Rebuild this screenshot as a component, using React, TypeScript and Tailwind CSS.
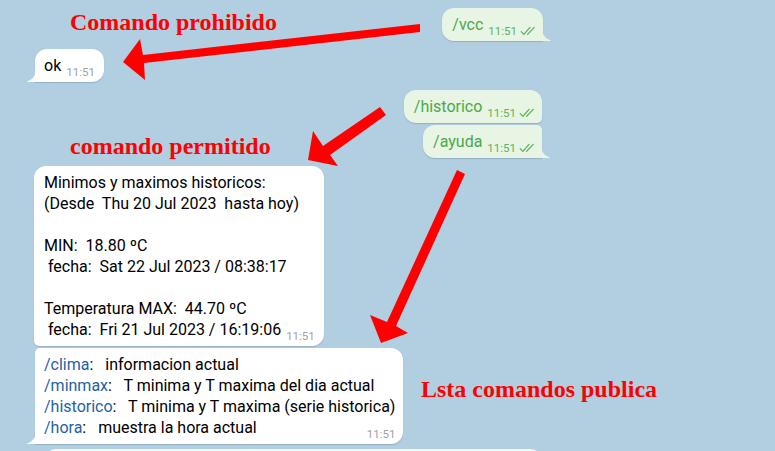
import React from "react";

function InTail() {
  return (
    <svg className="absolute bottom-0 left-[-8px]" width="9" height="13" viewBox="0 0 9 13">
      <path d="M9 0 C9 6 6 10.5 0.5 12.2 C0.2 12.4 0.4 13 1 13 L9 13 Z" fill="#ffffff" />
    </svg>
  );
}

function OutTail() {
  return (
    <svg className="absolute bottom-0 right-[-8px]" width="9" height="13" viewBox="0 0 9 13">
      <path d="M0 0 C0 6 3 10.5 8.5 12.2 C8.8 12.4 8.6 13 8 13 L0 13 Z" fill="#e8f5e5" />
    </svg>
  );
}

function Checks() {
  return (
    <svg width="16" height="10" viewBox="0 0 16 10" className="ml-[3px]">
      <path d="M1.2 5.6 L3.9 8.4 L10 1.4" fill="none" stroke="#5bb35a" strokeWidth="1.3" strokeLinecap="round" strokeLinejoin="round" />
      <path d="M7.6 8.4 L14.2 1.4" fill="none" stroke="#5bb35a" strokeWidth="1.3" strokeLinecap="round" />
    </svg>
  );
}

function OutBubble({ text, tail, radius, extra }: { text: string; tail?: boolean; radius: string; extra: string }) {
  return (
    <div className={`relative self-end bg-[#e8f5e5] pl-[10px] pr-[7px] pt-[6px] pb-[6px] flex items-end shadow-[0_1px_1px_rgba(60,90,110,0.25)] ${radius} ${extra}`}>
      <span className="text-[16px] leading-[21px] text-[#4aa949]">{text}</span>
      <span className="flex items-center ml-[5px] translate-y-[3px] text-[11.5px] leading-[14px] text-[#5bb35a]">
        11:51
        <Checks />
      </span>
      {tail && <OutTail />}
    </div>
  );
}

function Time() {
  return <span className="ml-[5px] shrink-0 translate-y-[3px] text-[11.5px] leading-[14px] text-[#a2a2a2]">11:51</span>;
}

function Cmd({ c, d }: { c: string; d: string }) {
  return (
    <span className="whitespace-pre">
      <span className="text-[#1f5fa6]">{c}</span>
      <span>{":   " + d}</span>
    </span>
  );
}

export default function App() {
  return (
    <div
      className="relative w-[775px] h-[451px] overflow-hidden bg-[#b2cee1]"
      style={{ fontFamily: "Roboto, 'Noto Sans', sans-serif" }}
    >
      <div className="flex flex-col w-[548px] pl-[35px] pt-[8px]">
        <OutBubble text="/vcc" tail radius="rounded-[12px] rounded-br-none" extra="mr-[5px]" />

        <div className="relative self-start mt-[8px] bg-white pl-[9px] pr-[9px] pt-[6px] pb-[6px] flex items-end rounded-[12px] rounded-bl-none shadow-[0_1px_1px_rgba(60,90,110,0.25)]">
          <span className="text-[16px] leading-[21px] text-black">ok</span>
          <span className="ml-[5px] translate-y-[3px] text-[11.5px] leading-[14px] text-[#a2a2a2]">11:51</span>
          <InTail />
        </div>

        <OutBubble text="/historico" radius="rounded-[12px] rounded-br-[5px]" extra="mt-[8px] mr-[6px]" />
        <OutBubble text="/ayuda" tail radius="rounded-[12px] rounded-tr-[5px] rounded-br-none" extra="mt-[2px] mr-[6px]" />

        <div className="relative self-start mt-[8px] -ml-[1px] bg-white pl-[10px] pr-[9px] pt-[6px] pb-[6px] rounded-[12px] rounded-bl-[5px] shadow-[0_1px_1px_rgba(60,90,110,0.25)] text-[16px] leading-[21px] text-black whitespace-pre">
          <div>Minimos y maximos historicos:</div>
          <div>(Desde  Thu 20 Jul 2023  hasta hoy)</div>
          <div>{"\u00a0"}</div>
          <div>MIN:  18.80 ºC</div>
          <div> fecha:  Sat 22 Jul 2023 / 08:38:17</div>
          <div>{"\u00a0"}</div>
          <div>Temperatura MAX:  44.70 ºC</div>
          <div className="flex items-end justify-between">
            <span> fecha:  Fri 21 Jul 2023 / 16:19:06</span>
            <Time />
          </div>
        </div>

        <div className="relative self-start mt-[2px] bg-white pl-[9px] pr-[8px] pt-[6px] pb-[6px] rounded-[12px] rounded-tl-[5px] rounded-bl-none shadow-[0_1px_1px_rgba(60,90,110,0.25)] text-[16px] leading-[21px] text-black">
          <div><Cmd c="/clima" d="informacion actual" /></div>
          <div><Cmd c="/minmax" d="T minima y T maxima del dia actual" /></div>
          <div><Cmd c="/historico" d="T minima y T maxima (serie historica)" /></div>
          <div className="flex items-end justify-between">
            <Cmd c="/hora" d="muestra la hora actual" />
            <Time />
          </div>
          <InTail />
        </div>

        <div className="mt-[5px] ml-[9px] w-[498px] h-[20px] bg-[#f4f8fb] rounded-t-[12px]" />
      </div>

      <svg className="absolute inset-0 pointer-events-none" width="775" height="451" viewBox="0 0 775 451">
        <polygon points="123,62 140,39 143,55 420,24 420,32 144,63 145,80" fill="#ff0000" />
        <polygon points="308,160 313,131 323,146 380,107 386,115 330,155 338,166" fill="#ff0000" />
        <polygon points="381,343 370,315 387,322 457,170 465,174 396,326 408,333" fill="#ff0000" />
      </svg>

      <div
        className="absolute left-[70px] top-[10px] text-[24px] leading-[24px] font-bold text-[#ff0000] whitespace-nowrap"
        style={{ fontFamily: "'Liberation Serif', serif" }}
      >
        Comando prohibido
      </div>
      <div
        className="absolute left-[70px] top-[134px] text-[24px] leading-[24px] font-bold text-[#ff0000] whitespace-nowrap"
        style={{ fontFamily: "'Liberation Serif', serif" }}
      >
        comando permitido
      </div>
      <div
        className="absolute left-[421px] top-[377px] text-[24px] leading-[24px] font-bold text-[#ff0000] whitespace-nowrap"
        style={{ fontFamily: "'Liberation Serif', serif" }}
      >
        Lsta comandos publica
      </div>
    </div>
  );
}
